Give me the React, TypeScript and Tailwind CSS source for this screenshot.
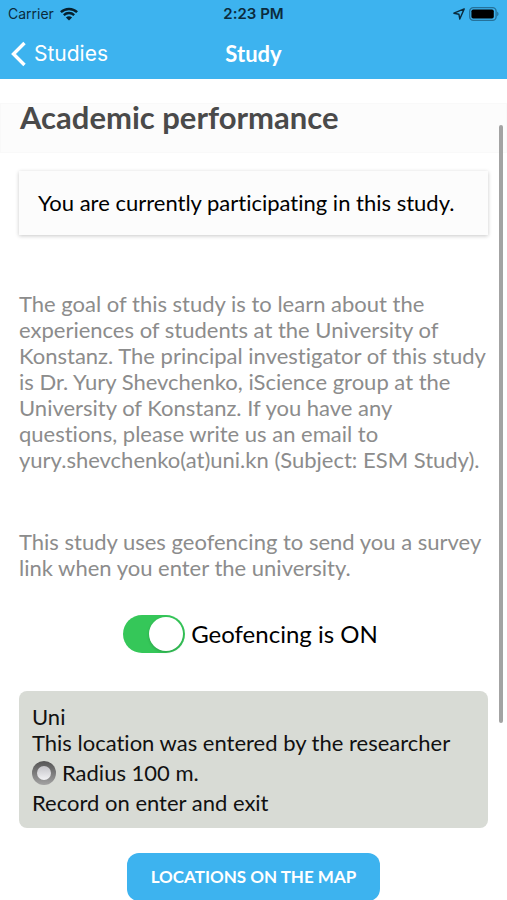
import { useState } from 'react';

function WifiIcon() {
  return (
    <svg className="h-[14px] w-[18px]" viewBox="0 0 18 14" fill="none" aria-hidden="true">
      <path d="M0.9 5.1C5.4 0.8 12.6 0.8 17.1 5.1" stroke="#06202e" strokeWidth="2.5" />
      <path d="M3.8 8.1C6.7 5.3 11.3 5.3 14.2 8.1" stroke="#06202e" strokeWidth="2.3" />
      <path d="M9 13.6L5.9 10.5C7.6 8.9 10.4 8.9 12.1 10.5Z" fill="#06202e" />
    </svg>
  );
}

function LocationArrow() {
  return (
    <svg className="h-3 w-3" viewBox="0 0 12 12" fill="none" aria-hidden="true">
      <path d="M11.2 0.9L0.9 5.2L5.9 6.2L6.8 11Z" stroke="#0b2b3d" strokeWidth="1.4" strokeLinejoin="round" />
    </svg>
  );
}

function Battery() {
  return (
    <svg className="h-[14px] w-[30px]" viewBox="0 0 30 14" aria-hidden="true">
      <rect x="0.7" y="0.7" width="26.4" height="12.6" rx="3.6" fill="none" stroke="#25719a" strokeWidth="1.3" />
      <rect x="2.4" y="2.5" width="22.4" height="9" rx="1.8" fill="#000" />
      <path d="M28.2 4.8C29.9 5.4 29.9 8.6 28.2 9.2Z" fill="#25719a" />
    </svg>
  );
}

function Header() {
  return (
    <header className="bg-[#3db3ef]">
      <div className="grid h-7 grid-cols-3 items-center px-2 font-['Inter',sans-serif] text-sm text-[#0b2b3d]">
        <div className="flex items-center gap-[6px]">
          <span>Carrier</span>
          <WifiIcon />
        </div>
        <div className="text-center text-[15px] font-semibold">2:23 PM</div>
        <div className="flex items-center justify-end gap-1">
          <LocationArrow />
          <Battery />
        </div>
      </div>
      <nav className="grid h-[51px] grid-cols-3 items-center px-[11px] text-white">
        <a href="#studies" className="flex items-center gap-2 font-['Inter',sans-serif] text-[21px]">
          <svg className="h-[26px] w-[15px]" viewBox="0 0 15 26" fill="none" aria-hidden="true">
            <path d="M13.5 2L2.5 13L13.5 24" stroke="currentColor" strokeWidth="3.4" />
          </svg>
          Studies
        </a>
        <h1 className="text-center text-[22px] font-bold">Study</h1>
      </nav>
    </header>
  );
}

export default function App() {
  const [geofencing, setGeofencing] = useState(true);

  return (
    <div className="relative bg-white font-['Lato',sans-serif] text-[22px] leading-[26px] text-black [font-variant-ligatures:none]">
      <Header />

      <main className="pt-6">
        <div className="border border-[#f9f9f9] bg-[#fcfcfc] px-[19px] pb-[22px]">
          <h2 className="text-[31px] leading-[26px] font-bold text-[#4a4a4a]">Academic performance</h2>
        </div>

        <div className="flex flex-col px-[19px] pt-[18px]">
          <div className="bg-[#fcfcfc] px-[19px] py-[19px] shadow-[0_1px_4px_rgba(0,0,0,0.22)]">
            You are currently participating in this study.
          </div>

          <p className="mt-14 text-[#8c8c8c]">
            The goal of this study is to learn about the experiences of students at the University of Konstanz. The
            principal investigator of this study is Dr. Yury Shevchenko, iScience group at the University of Konstanz.
            If you have any questions, please write us an email to yury.shevchenko(at)uni.kn (Subject: ESM Study).
          </p>

          <p className="mt-14 text-[#8c8c8c]">
            This study uses geofencing to send you a survey link when you enter the university.
          </p>

          <label className="mt-[34px] flex items-center justify-center gap-[6px] pr-[6px] text-2xl">
            <input
              type="checkbox"
              role="switch"
              checked={geofencing}
              onChange={(e) => setGeofencing(e.target.checked)}
              className="flex h-[38px] w-[62px] appearance-none items-center rounded-full bg-[#e9e9ea] px-[2px] before:h-[34px] before:w-[34px] before:rounded-full before:bg-white before:shadow-[0_1px_3px_rgba(0,0,0,0.2)] checked:justify-end checked:bg-[#35c759]"
            />
            Geofencing is {geofencing ? 'ON' : 'OFF'}
          </label>

          <section className="mt-[38px] rounded-lg bg-[#d8dbd5] px-[13px] pt-[13px] pb-3 text-[#111]">
            <h3>Uni</h3>
            <p>This location was entered by the researcher</p>
            <label className="flex h-[34px] items-center gap-[6px]">
              <input
                type="radio"
                name="radius"
                defaultChecked
                className="flex h-6 w-6 appearance-none items-center justify-center rounded-full bg-linear-to-b from-[#555] to-[#a3a3a3] before:h-[14px] before:w-[14px] before:rounded-full before:bg-linear-to-b before:from-[#c4c4c8] before:to-[#f2f2f4]"
              />
              Radius 100 m.
            </label>
            <p>Record on enter and exit</p>
          </section>

          <button
            type="button"
            className="mt-[25px] self-center rounded-xl bg-[#3db3ef] px-6 py-[11px] text-[17px] leading-[26px] font-bold text-white"
          >
            LOCATIONS ON THE MAP
          </button>
        </div>
      </main>

      {/* scroll indicator */}
      <div className="absolute top-[125px] right-1 h-[598px] w-1 rounded-full bg-[#a3a3a3]" />
    </div>
  );
}
